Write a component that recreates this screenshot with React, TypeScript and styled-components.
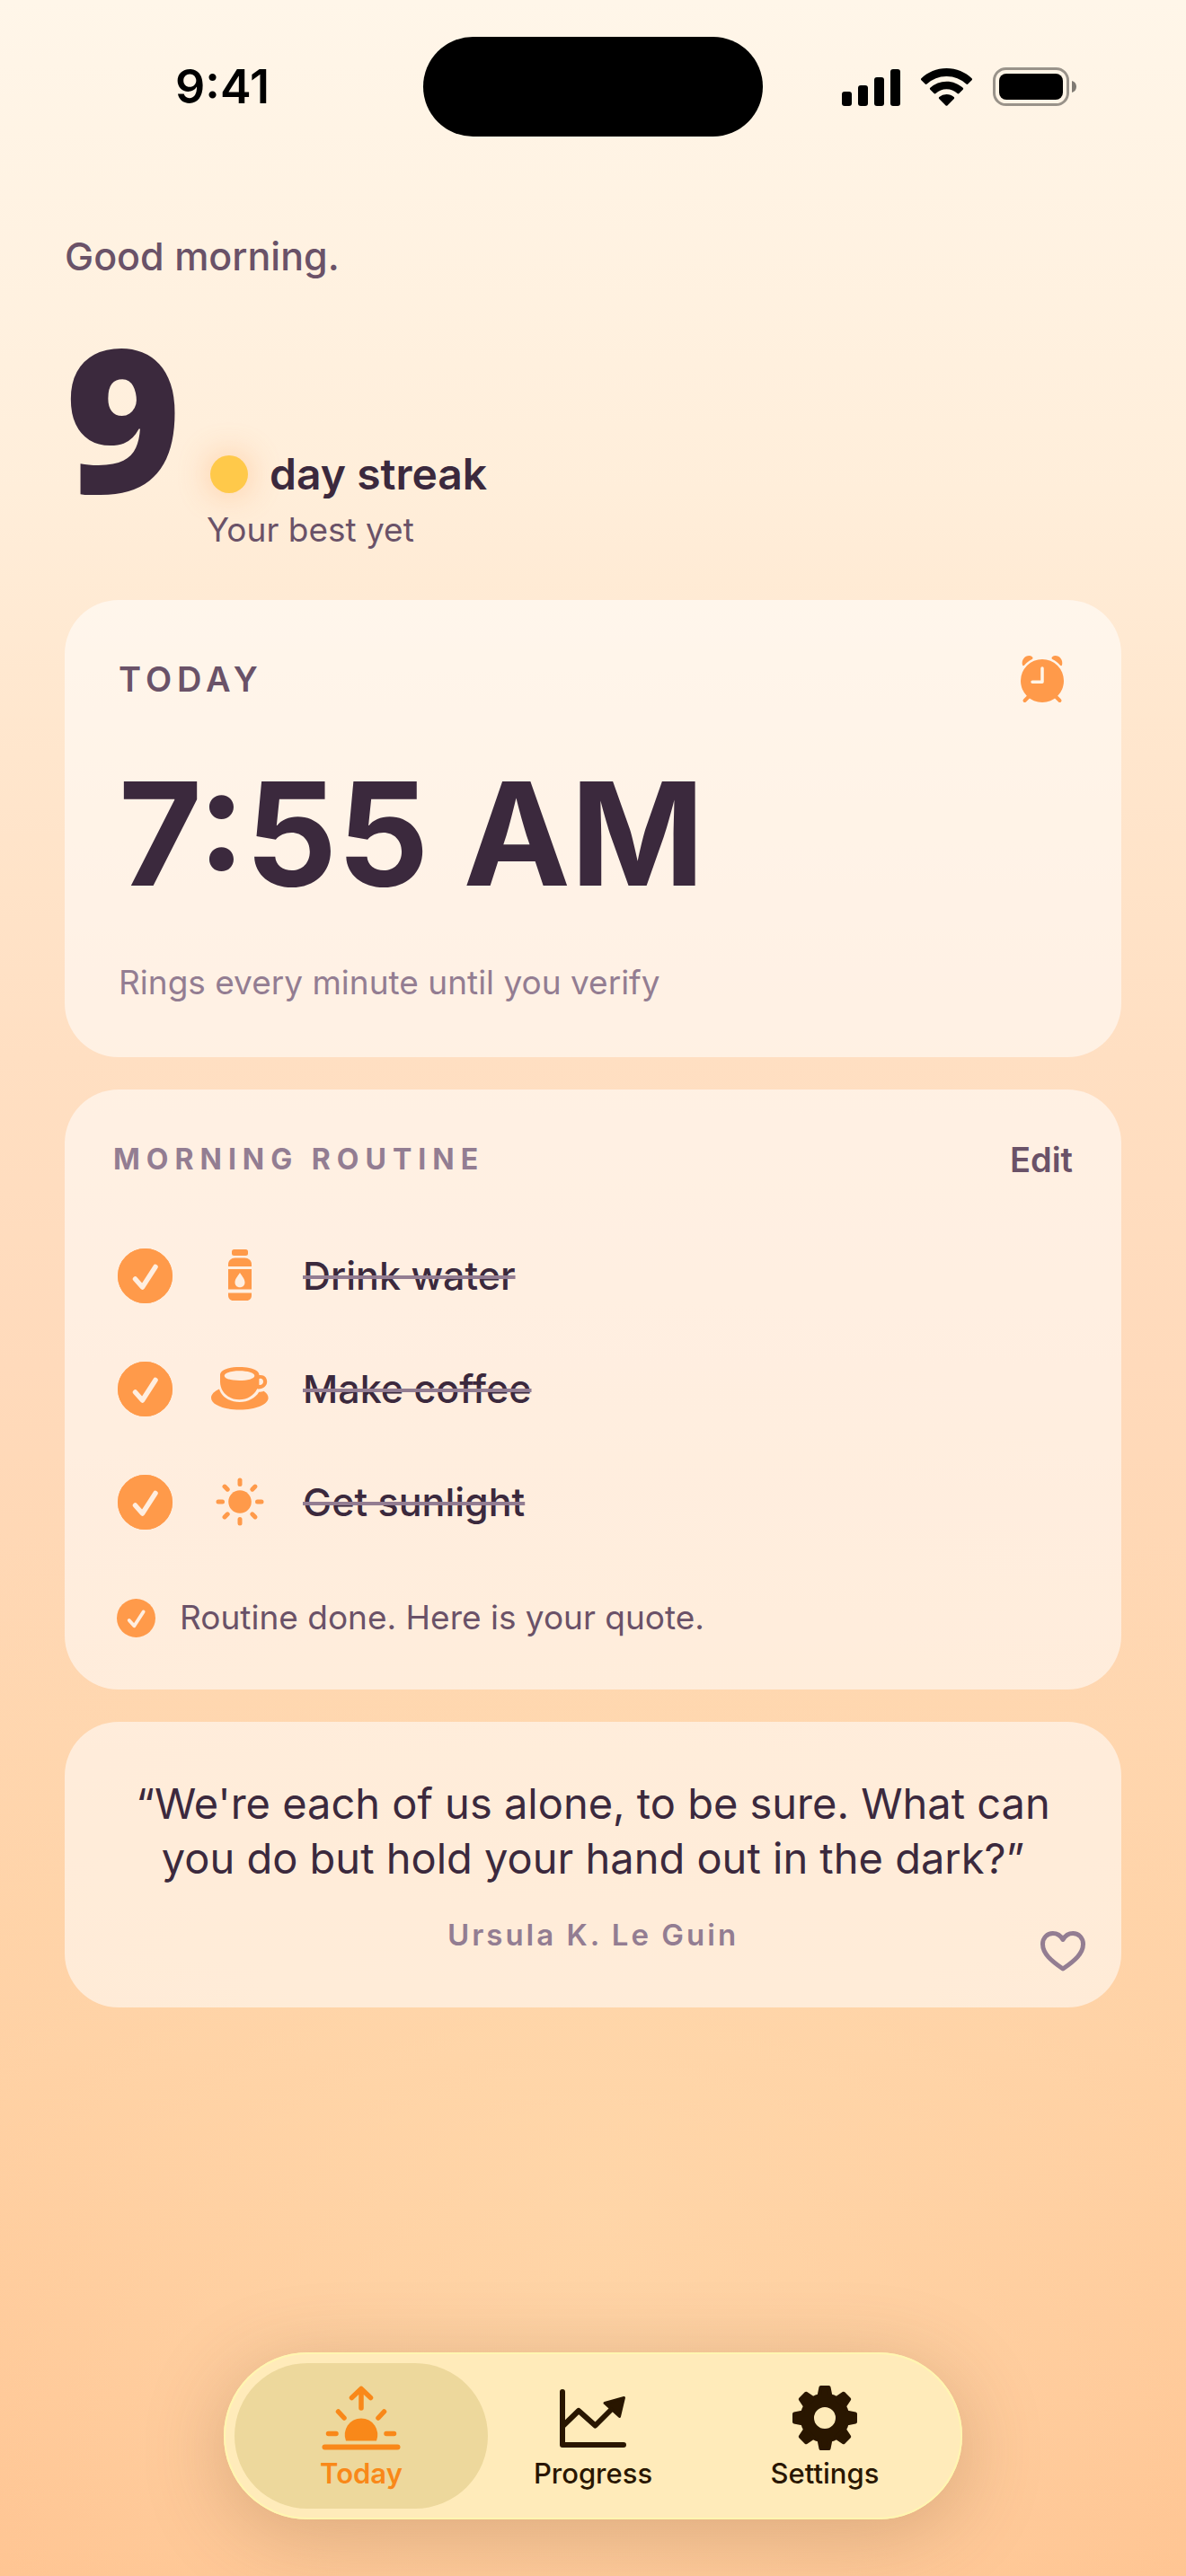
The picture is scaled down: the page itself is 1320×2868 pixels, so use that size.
import React, { useState } from "react";
import styled, { createGlobalStyle } from "styled-components";

const color = {
  ink: "#3b293d",
  soft: "#6a5268",
  muted: "#937d92",
  accent: "#ff9a4a",
  active: "#f98819",
  nav: "#291600",
};

const GlobalStyle = createGlobalStyle`
  * { box-sizing: border-box; }
  body {
    margin: 0;
    font-family: Inter, "Liberation Sans", sans-serif;
    color: ${color.ink};
  }
  h1, h2, p, ul, blockquote, figure { margin: 0; padding: 0; font-weight: inherit; }
  button { border: 0; padding: 0; background: none; font: inherit; cursor: pointer; }
  svg { display: block; flex: none; overflow: visible; }
`;

const Page = styled.div`
  min-height: 100vh;
  display: flex;
  flex-direction: column;
  background:
    radial-gradient(ellipse 75% 36% at 50% 86%, rgba(255, 219, 174, 0.65), rgba(255, 216, 172, 0) 100%),
    linear-gradient(180deg, #fff6e9 0%, #ffeeda 19%, #ffe8d0 26%, #ffdfc2 41%, #ffdabb 53%, #ffd6b0 66%, #ffcfa2 80%, #ffc18e 100%);
`;

const StatusBar = styled.header`
  display: grid;
  grid-template-columns: 1fr 378px 1fr;
  align-items: center;
  padding-top: 41px;
  color: #000;
`;

const Clock = styled.time`
  padding-left: 24px;
  text-align: center;
  font-size: 52px;
  line-height: 60px;
  font-weight: 600;
`;

const Island = styled.div`
  height: 111px;
  border-radius: 56px;
  background: #000;
`;

const StatusIcons = styled.div`
  display: flex;
  justify-content: flex-end;
  align-items: center;
  gap: 23px;
  padding-right: 122px;
`;

const Main = styled.main`
  display: flex;
  flex-direction: column;
  padding: 108px 72px 60px;
`;

const Greeting = styled.p`
  font-size: 43px;
  line-height: 50px;
  font-weight: 500;
  color: ${color.soft};
`;

const Streak = styled.h1`
  display: flex;
  align-items: flex-end;
  gap: 28px;
  margin-bottom: 52px;
`;

const StreakCount = styled.span`
  font-family: "Open Sans", Inter, sans-serif;
  font-size: 222px;
  line-height: 306px;
  font-weight: 800;
`;

const StreakText = styled.span`
  display: flex;
  flex-direction: column;
  gap: 6px;
`;

const StreakLabel = styled.span`
  display: flex;
  align-items: center;
  gap: 24px;
  padding-left: 4px;
  font-size: 48px;
  line-height: 60px;
  font-weight: 600;
`;

const StreakDot = styled.span`
  width: 42px;
  height: 42px;
  border-radius: 50%;
  background: #ffc94a;
  box-shadow: 0 0 36px rgba(255, 154, 74, 0.45);
`;

const Note = styled.span<{ $tone?: string }>`
  font-size: 37px;
  line-height: 52px;
  font-weight: 400;
  color: ${(p) => p.$tone ?? color.soft};
`;

const Stack = styled.div`
  display: flex;
  flex-direction: column;
  gap: 36px;
`;

const Card = styled.section<{ $pad: string }>`
  display: flex;
  flex-direction: column;
  padding: ${(p) => p.$pad};
  border-radius: 60px;
  background: rgba(255, 255, 255, 0.55);
`;

const CardHead = styled.div`
  display: flex;
  align-items: center;
  justify-content: space-between;
`;

const TodayTitle = styled.h2`
  font-size: 38px;
  line-height: 52px;
  font-weight: 600;
  letter-spacing: 6px;
  color: ${color.soft};
`;

const RoutineTitle = styled.h2`
  font-size: 32px;
  line-height: 44px;
  font-weight: 700;
  letter-spacing: 7px;
  color: ${color.muted};
`;

const AlarmTime = styled.time`
  margin: 56px 0 50px;
  font-size: 160px;
  line-height: 180px;
  font-weight: 700;
`;

const EditButton = styled.button`
  && {
    font-size: 38px;
    line-height: 52px;
    font-weight: 600;
    color: ${color.soft};
  }
`;

const Tasks = styled.ul`
  list-style: none;
  && {
    margin: 40px 0 40px;
    padding-left: 5px;
  }
`;

const Task = styled.label`
  display: grid;
  grid-template-columns: 66px 80px 1fr;
  column-gap: 30px;
  align-items: center;
  height: 126px;
  font-size: 43px;
  line-height: 56px;
  font-weight: 500;
`;

const TickCell = styled.span`
  display: grid;
  & > * { grid-area: 1 / 1; }
`;

const Tick = styled.input`
  appearance: none;
  width: 61px;
  height: 61px;
  margin: 0;
  border: 4px solid ${color.accent};
  border-radius: 50%;
`;

const TaskIcon = styled.span`
  display: flex;
  justify-content: center;
`;

const TaskName = styled.span<{ $done: boolean }>`
  justify-self: start;
  text-decoration: ${(p) => (p.$done ? "line-through" : "none")};
  text-decoration-color: ${color.muted};
  text-decoration-thickness: 4px;
`;

const Summary = styled.div`
  display: flex;
  align-items: center;
  gap: 27px;
  padding-left: 4px;
`;

const Quote = styled.blockquote`
  && { padding: 0 20px; }
  font-size: 47px;
  line-height: 61px;
  text-align: center;
`;

const QuoteFoot = styled.figcaption`
  display: grid;
  grid-template-columns: 1fr auto 1fr;
  height: 63px;
  margin-top: 33px;
`;

const Author = styled.cite`
  grid-column: 2;
  font-size: 33px;
  line-height: 44px;
  font-style: normal;
  font-weight: 600;
  letter-spacing: 3px;
  color: ${color.muted};
`;

const LikeButton = styled.button`
  justify-self: end;
  align-self: end;
  color: ${color.muted};
`;

const TabBar = styled.nav`
  display: flex;
  align-self: center;
  margin-top: auto;
  margin-bottom: 63px;
  padding: 12px;
  border-radius: 93px;
  background: #ffebba;
  box-shadow: inset 0 0 0 2px #fff6b0, 0 16px 90px rgba(120, 75, 40, 0.28);
`;

const Tab = styled.button<{ $active: boolean }>`
  && {
    display: flex;
    flex-direction: column;
    align-items: center;
    gap: 8px;
    width: 282px;
    padding: 25px 0 21px;
    border-radius: 81px;
    background: ${(p) => (p.$active ? "#edd89c" : "transparent")};
    color: ${(p) => (p.$active ? color.active : color.nav)};
    font-size: 31px;
    line-height: 36px;
    font-weight: ${(p) => (p.$active ? 600 : 500)};
  }
  & + & { margin-left: -24px; }
`;

const Signal = () => (
  <svg width="65" height="42" viewBox="0 0 65 42" fill="#000">
    <rect x="0" y="26" width="11" height="16" rx="3" />
    <rect x="18" y="19" width="11" height="23" rx="3" />
    <rect x="36" y="10" width="11" height="32" rx="3" />
    <rect x="54" y="1" width="11" height="41" rx="3" />
  </svg>
);

const Wifi = () => (
  <svg width="57" height="42" viewBox="0 0 57 42" fill="#000">
    <path d="M28.500 0C39.500 0 49.500 4.300 56.600 11.300c.6.600.6 1.400 0 2l-4.300 4.300c-.5.500-1.300.5-1.900 0A31.500 31.500 0 0 0 28.500 9 31.500 31.500 0 0 0 6.600 17.600c-.6.500-1.400.5-1.900 0L.4 13.300c-.6-.6-.6-1.400 0-2C7.500 4.300 17.500 0 28.500 0Z" />
    <path d="M28.500 14.700c7 0 13.400 2.700 18.200 7.100.6.500.6 1.300 0 1.900l-4.300 4.300c-.5.500-1.300.500-1.900.1a17.600 17.600 0 0 0-24 0c-.6.400-1.400.4-1.900-.1l-4.300-4.300c-.6-.6-.6-1.400 0-1.900a26.800 26.800 0 0 1 18.200-7.100Z" />
    <path d="M28.500 29c3.100 0 6 1.200 8.200 3.100.6.500.6 1.300.1 1.900l-7.400 7.400c-.5.600-1.300.6-1.800 0L20.200 34c-.5-.6-.5-1.400.1-1.900a12.400 12.400 0 0 1 8.200-3.100Z" />
  </svg>
);

const Battery = () => (
  <svg width="93" height="43" viewBox="0 0 93 43">
    <rect x="1.500" y="1.500" width="82" height="40" rx="13" fill="none" stroke="#000" strokeOpacity="0.4" strokeWidth="3" />
    <rect x="7" y="7" width="71" height="29" rx="8" fill="#000" />
    <path d="M88 15c3.500 1.200 5 3.600 5 6.500s-1.500 5.300-5 6.500Z" fill="#000" fillOpacity="0.5" />
  </svg>
);

const Alarm = () => (
  <svg width="48" height="52" viewBox="0 0 48 52">
    <g fill={color.accent}>
      <circle cx="24" cy="28" r="24" />
      <path d="M2 10.500C.5 5 4.500 0 9.500 0c2.500 0 4 1.500 4 2.500 0 .8-.5 1.300-1.300 1.800C9 6 6.500 8 4.500 10.300 3.500 11.400 2.500 11.600 2 10.500Z" />
      <path d="M46 10.500C47.500 5 43.500 0 38.500 0c-2.500 0-4 1.500-4 2.500 0 .8.5 1.300 1.300 1.800C39 6 41.500 8 43.500 10.300c1 1.100 2 1.300 2.500.2Z" />
    </g>
    <path d="m9 45.500-4.500 4.500M39 45.500l4.500 4.500" stroke={color.accent} strokeWidth="4" strokeLinecap="round" />
    <path d="M24 14v15.300H13" fill="none" stroke="#fff5e8" strokeWidth="3.500" strokeLinecap="round" strokeLinejoin="round" />
  </svg>
);

const CheckMark = ({ size }: { size: number }) => (
  <svg width={size} height={size} viewBox="0 0 61 61" pointerEvents="none">
    <circle cx="30.500" cy="30.500" r="30.500" fill={color.accent} />
    <path d="m19.500 34 8 9 14.500-22.500" fill="none" stroke="#ffeee0" strokeWidth="5.500" strokeLinecap="round" strokeLinejoin="round" />
  </svg>
);

const Bottle = () => (
  <svg width="26" height="58" viewBox="0 0 26 58" fill={color.accent}>
    <rect x="4" y="0" width="18" height="7" rx="2.500" />
    <path d="M0 19v-2.500C0 12.500 3.500 9.500 7.500 9.500h11c4 0 7.500 3 7.500 7V19Z" />
    <path fillRule="evenodd" d="M0 22h26v22.500H0ZM13 26c-2.500 4-5.500 7-5.500 10.800 0 3.300 2.400 5.500 5.500 5.500s5.500-2.200 5.500-5.500C18.500 33 15.500 30 13 26Z" />
    <path d="M0 48.500h26V51c0 3.500-2 6-5.500 6h-15C2 57 0 54.500 0 51Z" />
  </svg>
);

const Cup = () => (
  <svg width="64" height="48" viewBox="0 0 64 48">
    <path fill={color.accent} d="M9 24.500C3.500 27 0 30.400 0 34.300 0 42 14.200 47.500 31.800 47.500S63.600 42 63.600 34.300c0-2.800-1.800-5.400-5-7.500-1.600.8-3.500 1-5.400 1C49.500 34.500 41 39 31.800 39 20.500 39 11.500 33 9 24.500Z" />
    <path fill={color.accent} fillRule="evenodd" d="M31.500 0C43 0 53.500 3 53.500 9c5.500-.8 8.700 2.500 8.700 7.300 0 5-4.500 8.700-11 8-3.500 7.500-11 12-19.700 12-12 0-21.500-8.500-21.500-20V9C10 3 20 0 31.500 0ZM31.500 4.300c-9 0-16.800 2.200-16.800 5.400s7.800 5.400 16.800 5.400 16.800-2.200 16.800-5.400-7.800-5.400-16.800-5.400ZM53.400 13.500v5.500c0 .8 0 1 .6 1 2.500 0 4-1.700 4-3.800 0-2.200-1.200-3.500-3.200-3.500-.9 0-1.400.2-1.400.8Z" />
  </svg>
);

const Sun = () => (
  <svg width="54" height="54" viewBox="-27 -27 54 54">
    <circle r="12.800" fill={color.accent} />
    {[0, 45, 90, 135, 180, 225, 270, 315].map((a) => (
      <path key={a} d="M0-19.500v-4.500" transform={`rotate(${a})`} stroke={color.accent} strokeWidth="5" strokeLinecap="round" />
    ))}
  </svg>
);

const Heart = () => (
  <svg width="50" height="45" viewBox="0 0 50 45">
    <path d="M25 42C12 33 2.500 25 2.500 14.500 2.500 7.500 7.500 2.500 13.800 2.500c4.700 0 8.700 2.500 11.200 7 2.500-4.500 6.500-7 11.200-7 6.300 0 11.300 5 11.300 12C47.500 25 38 33 25 42Z" fill="none" stroke="currentColor" strokeWidth="5" strokeLinejoin="round" />
  </svg>
);

const Sunrise = () => (
  <svg width="88" height="72" viewBox="0 0 88 72" fill="none" stroke="currentColor" strokeWidth="5.500" strokeLinecap="round" strokeLinejoin="round">
    <path d="M44 25V4M33.500 13.500 44 3.500l10.500 10" />
    <path d="m18.500 29 6.500 7M69.500 29 63 36M7.500 53.500h8.500M72 53.500h8.500" />
    <path d="M3.500 68.500h81" strokeWidth="6" />
    <path d="M27 61.500a18.300 18.300 0 1 1 34 0Z" fill="currentColor" stroke="none" />
  </svg>
);

const Trend = () => (
  <svg width="74" height="72" viewBox="0 -4 74 72" fill="none" stroke="currentColor" strokeWidth="6" strokeLinecap="round" strokeLinejoin="round">
    <path d="M3 3v59h68" />
    <path d="m4 40.500 17-16.500 18.500 16.500L60 20" />
    <path d="M71.500 9.500 50 15.500l16.500 15Z" fill="currentColor" strokeWidth="3" />
  </svg>
);

const Gear = () => (
  <svg width="72" height="72" viewBox="-36 -36 72 72" fill="currentColor">
    <path fillRule="evenodd" d="M0-27.500a27.500 27.500 0 1 1 0 55 27.500 27.500 0 0 1 0-55ZM0-12a12 12 0 1 0 0 24 12 12 0 0 0 0-24Z" />
    {[0, 45, 90, 135, 180, 225, 270, 315].map((a) => (
      <path key={a} d="M-6.500-24-4.500-34h9l2 10Z" transform={`rotate(${a})`} stroke="currentColor" strokeWidth="4" strokeLinejoin="round" />
    ))}
  </svg>
);

const TASKS = [
  { name: "Drink water", Icon: Bottle },
  { name: "Make coffee", Icon: Cup },
  { name: "Get sunlight", Icon: Sun },
];

const TABS = [
  { name: "Today", Icon: Sunrise },
  { name: "Progress", Icon: Trend },
  { name: "Settings", Icon: Gear },
];

export default function App() {
  const [done, setDone] = useState([true, true, true]);
  const [tab, setTab] = useState("Today");
  const toggle = (i: number) => setDone(done.map((d, k) => (k === i ? !d : d)));

  return (
    <Page>
      <GlobalStyle />
      <StatusBar>
        <Clock>9:41</Clock>
        <Island />
        <StatusIcons>
          <Signal />
          <Wifi />
          <Battery />
        </StatusIcons>
      </StatusBar>
      <Main>
        <Greeting>Good morning.</Greeting>
        <Streak>
          <StreakCount>9</StreakCount>
          <StreakText>
            <StreakLabel>
              <StreakDot />
              day streak
            </StreakLabel>
            <Note>Your best yet</Note>
          </StreakText>
        </Streak>
        <Stack>
          <Card $pad="62px 64px 57px 60px">
            <CardHead>
              <TodayTitle>TODAY</TodayTitle>
              <Alarm />
            </CardHead>
            <AlarmTime>7:55 AM</AlarmTime>
            <Note $tone={color.muted}>Rings every minute until you verify</Note>
          </Card>
          <Card $pad="52px 54px 54px">
            <CardHead>
              <RoutineTitle>MORNING ROUTINE</RoutineTitle>
              <EditButton type="button">Edit</EditButton>
            </CardHead>
            <Tasks>
              {TASKS.map(({ name, Icon }, i) => (
                <li key={name}>
                  <Task>
                    <TickCell>
                      <Tick type="checkbox" checked={done[i]} onChange={() => toggle(i)} />
                      {done[i] && <CheckMark size={61} />}
                    </TickCell>
                    <TaskIcon>
                      <Icon />
                    </TaskIcon>
                    <TaskName $done={done[i]}>{name}</TaskName>
                  </Task>
                </li>
              ))}
            </Tasks>
            <Summary>
              <CheckMark size={43} />
              <Note>Routine done. Here is your quote.</Note>
            </Summary>
          </Card>
          <Card as="figure" $pad="60px 40px 40px">
            <Quote>“We're each of us alone, to be sure. What can you do but hold your hand out in the dark?”</Quote>
            <QuoteFoot>
              <Author>Ursula K. Le Guin</Author>
              <LikeButton type="button" aria-label="Save quote">
                <Heart />
              </LikeButton>
            </QuoteFoot>
          </Card>
        </Stack>
      </Main>
      <TabBar>
        {TABS.map(({ name, Icon }) => (
          <Tab key={name} type="button" $active={tab === name} onClick={() => setTab(name)}>
            <Icon />
            {name}
          </Tab>
        ))}
      </TabBar>
    </Page>
  );
}
